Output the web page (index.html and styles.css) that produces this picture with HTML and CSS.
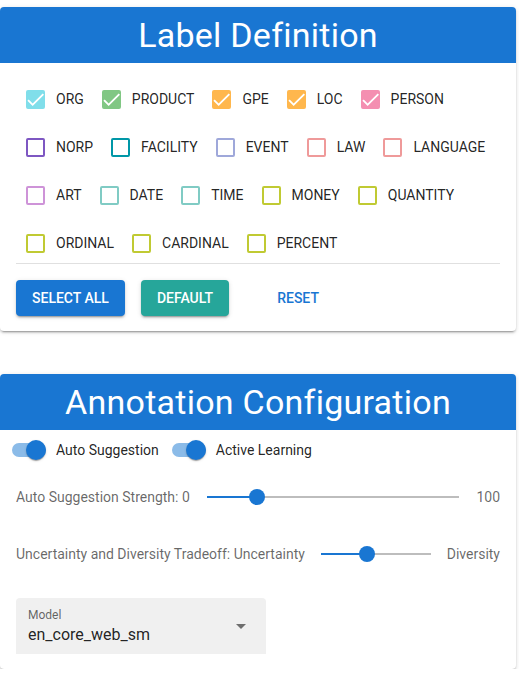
FILE: index.html
```html
<!DOCTYPE html>
<html>
<head>
<meta charset="utf-8">
<link rel="stylesheet" href="styles.css">
</head>
<body>
<div class="page">
  <section class="card card-labels">
    <header class="card-head">Label Definition</header>
    <div class="labels">
      <div class="label-row">
        <label class="cb checked c-org"><span class="box"><svg viewBox="3 3 18 18"><path d="M9 16.17L4.83 12l-1.42 1.41L9 19 21 7l-1.41-1.41z"/></svg></span>ORG</label>
        <label class="cb checked c-product"><span class="box"><svg viewBox="3 3 18 18"><path d="M9 16.17L4.83 12l-1.42 1.41L9 19 21 7l-1.41-1.41z"/></svg></span>PRODUCT</label>
        <label class="cb checked c-gpe"><span class="box"><svg viewBox="3 3 18 18"><path d="M9 16.17L4.83 12l-1.42 1.41L9 19 21 7l-1.41-1.41z"/></svg></span>GPE</label>
        <label class="cb checked c-loc"><span class="box"><svg viewBox="3 3 18 18"><path d="M9 16.17L4.83 12l-1.42 1.41L9 19 21 7l-1.41-1.41z"/></svg></span>LOC</label>
        <label class="cb checked c-person"><span class="box"><svg viewBox="3 3 18 18"><path d="M9 16.17L4.83 12l-1.42 1.41L9 19 21 7l-1.41-1.41z"/></svg></span>PERSON</label>
      </div>
      <div class="label-row">
        <label class="cb c-norp"><span class="box"></span>NORP</label>
        <label class="cb c-facility"><span class="box"></span>FACILITY</label>
        <label class="cb c-event"><span class="box"></span>EVENT</label>
        <label class="cb c-law"><span class="box"></span>LAW</label>
        <label class="cb c-law"><span class="box"></span>LANGUAGE</label>
      </div>
      <div class="label-row">
        <label class="cb c-art"><span class="box"></span>ART</label>
        <label class="cb c-date"><span class="box"></span>DATE</label>
        <label class="cb c-date"><span class="box"></span>TIME</label>
        <label class="cb c-lime"><span class="box"></span>MONEY</label>
        <label class="cb c-lime"><span class="box"></span>QUANTITY</label>
      </div>
      <div class="label-row">
        <label class="cb c-lime"><span class="box"></span>ORDINAL</label>
        <label class="cb c-lime"><span class="box"></span>CARDINAL</label>
        <label class="cb c-lime"><span class="box"></span>PERCENT</label>
      </div>
    </div>
    <hr class="divider">
    <div class="actions">
      <button class="btn btn-blue">Select All</button>
      <button class="btn btn-teal">Default</button>
      <button class="btn btn-text">Reset</button>
    </div>
  </section>

  <section class="card card-config">
    <header class="card-head">Annotation Configuration</header>
    <div class="config">
      <div class="toggles">
        <label class="switch"><span class="track"><span class="thumb"></span></span>Auto Suggestion</label>
        <label class="switch"><span class="track"><span class="thumb"></span></span>Active Learning</label>
      </div>
      <div class="slider-row row-1">
        <span class="s-label">Auto Suggestion Strength: 0</span>
        <div class="slider"><div class="fill" style="width:20%"></div><div class="knob" style="left:20%"></div></div>
        <span class="s-label">100</span>
      </div>
      <div class="slider-row row-2">
        <span class="s-label">Uncertainty and Diversity Tradeoff: Uncertainty</span>
        <div class="slider"><div class="fill" style="width:42%"></div><div class="knob" style="left:42%"></div></div>
        <span class="s-label">Diversity</span>
      </div>
      <div class="select">
        <div class="select-text">
          <span class="select-label">Model</span>
          <span class="select-value">en_core_web_sm</span>
        </div>
        <svg class="arrow" viewBox="0 0 10 5"><path d="M0 0h10L5 5z"/></svg>
      </div>
    </div>
  </section>
</div>
</body>
</html>
```

FILE: styles.css
```css
* { box-sizing: border-box; }
html, body { margin: 0; padding: 0; background: #fff; }
body {
  font-family: Roboto, "Liberation Sans", Arial, sans-serif;
  color: rgba(0,0,0,0.87);
}
.page {
  width: 516px;
  padding-top: 7px;
}
.card {
  background: #fff;
  border-radius: 4px;
  box-shadow: 0 3px 1px -2px rgba(0,0,0,0.2), 0 2px 2px 0 rgba(0,0,0,0.14), 0 1px 5px 0 rgba(0,0,0,0.12);
  overflow: hidden;
}
.card-head {
  height: 56px;
  background: #1976d2;
  color: #fff;
  font-size: 34px;
  letter-spacing: 0.25px;
  line-height: 56px;
  text-align: center;
  font-weight: 400;
}
.labels {
  padding: 16px 0 0 26px;
  display: flex;
  flex-direction: column;
  gap: 8px;
}
.label-row {
  display: flex;
  height: 40px;
  align-items: center;
}
.cb {
  display: flex;
  align-items: center;
  font-size: 14px;
  margin-right: 18px;
  color: rgba(0,0,0,0.87);
}
.box {
  position: relative;
  width: 19px;
  height: 19px;
  border: 2px solid var(--c);
  border-radius: 2px;
  margin-right: 11px;
}
.checked .box { background: var(--c); }
.box svg {
  position: absolute;
  left: -1px;
  top: -1px;
  width: 17px;
  height: 17px;
  fill: #fff;
}
.c-org { --c: #80deea; }
.c-product { --c: #81c784; }
.c-gpe, .c-loc { --c: #ffb74d; }
.c-person { --c: #f48fb1; }
.c-norp { --c: #7e57c2; }
.c-facility { --c: #0097a7; }
.c-event { --c: #9fa8da; }
.c-law { --c: #ef9a9a; }
.c-art { --c: #ce93d8; }
.c-date { --c: #80cbc4; }
.c-lime { --c: #c0ca33; }
.divider {
  margin: 0 16px;
  border: 0;
  border-top: 1px solid #e0e0e0;
}
.actions {
  display: flex;
  gap: 16px;
  padding: 16px 16px 15px;
}
.btn {
  height: 36px;
  border: 0;
  border-radius: 4px;
  font-family: inherit;
  font-size: 14px;
  font-weight: 500;
  text-transform: uppercase;
  padding: 0 16px;
  color: #fff;
}
.btn-blue { background: #1976d2; box-shadow: 0 3px 1px -2px rgba(0,0,0,0.2), 0 2px 2px 0 rgba(0,0,0,0.14), 0 1px 5px 0 rgba(0,0,0,0.12); }
.btn-teal { background: #26a69a; box-shadow: 0 3px 1px -2px rgba(0,0,0,0.2), 0 2px 2px 0 rgba(0,0,0,0.14), 0 1px 5px 0 rgba(0,0,0,0.12); }
.btn-text { background: transparent; color: #1976d2; margin-left: 16px; }

.card-config { margin-top: 43px; }
.config { padding: 0 16px 15px; }
.toggles {
  display: flex;
  height: 40px;
  align-items: center;
  margin-left: -4px;
}
.switch {
  display: flex;
  align-items: center;
  font-size: 14px;
  margin-right: 13px;
}
.track {
  position: relative;
  width: 34px;
  height: 14px;
  border-radius: 7px;
  background: #8bbbe8;
  margin-right: 10px;
}
.thumb {
  position: absolute;
  right: 0;
  top: -3px;
  width: 20px;
  height: 20px;
  border-radius: 50%;
  background: #1976d2;
  box-shadow: 0 2px 1px -1px rgba(0,0,0,0.2), 0 1px 1px 0 rgba(0,0,0,0.14), 0 1px 3px 0 rgba(0,0,0,0.12);
}
.slider-row {
  display: flex;
  align-items: center;
  height: 40px;
  gap: 17px;
}
.row-1 { margin-top: 7px; }
.row-2 { margin-top: 17px; gap: 16px; }
.s-label {
  font-size: 14px;
  color: rgba(0,0,0,0.6);
  white-space: nowrap;
}
.slider {
  position: relative;
  flex: 1;
  height: 2px;
  background: #bdbdbd;
}
.fill {
  height: 2px;
  background: #1976d2;
}
.knob {
  position: absolute;
  top: -7px;
  width: 16px;
  height: 16px;
  margin-left: -8px;
  border-radius: 50%;
  background: #1976d2;
}
.select {
  margin-top: 24px;
  width: 250px;
  height: 56px;
  background: #f0f0f0;
  border-radius: 4px 4px 0 0;
  display: flex;
  align-items: center;
  padding: 0 20px 0 12px;
}
.select-text {
  flex: 1;
  display: flex;
  flex-direction: column;
  gap: 2px;
}
.select-label {
  font-size: 12px;
  color: rgba(0,0,0,0.6);
  line-height: 16px;
}
.select-value {
  font-size: 16px;
  line-height: 20px;
  color: rgba(0,0,0,0.87);
}
.arrow { width: 10px; height: 5px; fill: rgba(0,0,0,0.54); }
```
